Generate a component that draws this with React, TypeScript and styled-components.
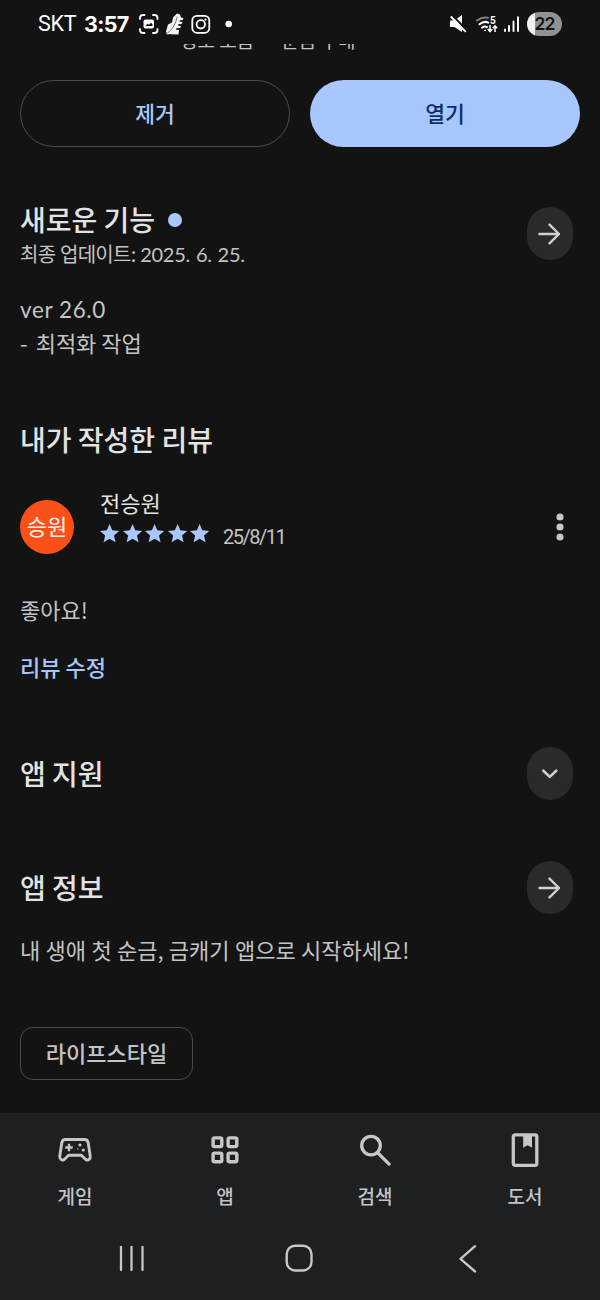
import React from "react";
import styled, { createGlobalStyle } from "styled-components";

const Global = createGlobalStyle`
  * { box-sizing: border-box; }
  body { margin: 0; background: #131313; }
`;

const Screen = styled.div`
  width: 600px;
  height: 1300px;
  display: flex;
  flex-direction: column;
  overflow: hidden;
  background: #131313;
  color: #c4c4c4;
  font-family: "Noto Sans CJK KR", sans-serif;
  font-size: 22px;
  white-space: nowrap;
`;

const StatusBar = styled.header`
  height: 44px;
  flex: none;
  display: flex;
  align-items: center;
  padding: 3px 38px 0;
  color: #fff;
`;

const Carrier = styled.span`
  width: 46px;
  font: 400 21.5px/24px Roboto, sans-serif;
  letter-spacing: -0.2px;
`;

const Clock = styled.span`
  width: 54px;
  font: 700 21.5px/24px Inter, sans-serif;
  letter-spacing: -0.7px;
`;

const StatusIcons = styled.svg`
  display: block;
  flex: none;
`;

const Spacer = styled.div`
  flex: 1;
`;

const Battery = styled.div`
  width: 35px;
  height: 24px;
  margin-left: 6px;
  border-radius: 12px;
  background: linear-gradient(90deg, #f2f2f2 0 7.5px, #929292 7.5px);
  color: #151515;
  text-align: center;
  font: 600 17.5px/24px Inter, sans-serif;
  letter-spacing: -0.8px;
`;

const Peek = styled.div`
  height: 36px;
  flex: none;
  overflow: hidden;
  padding-left: 180px;
  display: flex;
  gap: 27px;
  font-size: 19px;
  line-height: 28px;
  color: #c4c4c4;

  span {
    margin-top: -18px;
    height: 28px;
  }
`;

const Actions = styled.div`
  display: grid;
  grid-template-columns: 1fr 1fr;
  gap: 20px;
  padding: 0 20px;
  height: 67px;
  flex: none;
`;

const ActionButton = styled.button<{ $filled?: boolean }>`
  border: ${(p) => (p.$filled ? "0" : "1.5px solid #4a4b4c")};
  border-radius: 34px;
  background: ${(p) => (p.$filled ? "#a8c7fc" : "transparent")};
  color: ${(p) => (p.$filled ? "#0b2f6d" : "#a8c7fa")};
  font: 500 21.5px/30px "Noto Sans CJK KR", sans-serif;
  padding: 0 0 2px;
`;

const Section = styled.section<{ $top: number }>`
  margin-top: ${(p) => p.$top}px;
  padding: 0 20px;
  flex: none;
`;

const SectionHead = styled.div<{ $h: number }>`
  height: ${(p) => p.$h}px;
  display: flex;
  align-items: center;
  justify-content: space-between;
  padding-right: 7px;
`;

const Title = styled.h2`
  margin: 0;
  display: flex;
  align-items: center;
  gap: 13px;
  color: #e3e3e3;
  font-size: 28px;
  line-height: 38px;
  padding-bottom: 2px;
  font-weight: 500;
`;

const NewDot = styled.i`
  width: 14px;
  height: 14px;
  margin-top: 2px;
  border-radius: 50%;
  background: #a8c7fa;
`;

const Subtitle = styled.div`
  font-size: 20px;
  line-height: 28px;
  letter-spacing: -0.75px;
  word-spacing: 1px;
`;

const Digits = styled.span`
  font-family: Lato, sans-serif;
  font-size: 20px;
  line-height: 1;
  letter-spacing: -0.25px;
`;

const RoundButton = styled.button`
  width: 46px;
  height: 53px;
  border: 0;
  padding: 0;
  border-radius: 24px;
  background: #292a2c;
  display: grid;
  place-items: center;
`;

const Body = styled.p<{ $top?: number }>`
  margin: ${(p) => p.$top ?? 0}px 0 0;
  line-height: 28px;
  word-spacing: 0.4px;
`;

const Notes = styled.div`
  margin-top: 26px;
  line-height: 34px;
  height: 67px;
`;

const Version = styled.div`
  height: 33px;
  font-family: Lato, sans-serif;
  font-size: 22.5px;
  letter-spacing: 0.6px;
`;

const Note = styled.div`
  height: 34px;
  display: flex;
  gap: 8px;
  line-height: 32px;
`;

const ReviewRow = styled.div`
  height: 74px;
  margin-top: 30px;
  display: flex;
  align-items: center;
`;

const Avatar = styled.div`
  width: 54px;
  height: 54px;
  border-radius: 50%;
  background: #fb5118;
  color: #fff3ee;
  font-size: 22px;
  line-height: 51px;
  text-align: center;
`;

const Reviewer = styled.div`
  margin-left: 26px;
  flex: 1;
  height: 74px;
`;

const Name = styled.div`
  color: #e3e3e3;
  height: 28px;
  line-height: 25px;
`;

const Rating = styled.div`
  display: flex;
  align-items: center;
  height: 32px;
`;

const DateText = styled.span`
  margin: 5px 0 0 10px;
  font: 400 20px/26px Roboto, sans-serif;
  letter-spacing: -1.5px;
`;

const EditLink = styled.div`
  margin-top: 29px;
  line-height: 28px;
  font-weight: 500;
  color: #a8c7fa;
`;

const Chip = styled.span`
  display: block;
  width: 173px;
  height: 53px;
  border: 1.5px solid #4a4b4c;
  border-radius: 13px;
  text-align: center;
  font-weight: 500;
  line-height: 48px;
`;

const Bottom = styled.footer`
  margin-top: auto;
  height: 187px;
  flex: none;
  background: #1e1f21;
`;

const Tabs = styled.nav`
  display: grid;
  grid-template-columns: repeat(4, 1fr);
  height: 104px;
`;

const Tab = styled.div`
  display: flex;
  flex-direction: column;
  align-items: center;
  padding-top: 17px;
  font-size: 19px;
  line-height: 26px;
  font-weight: 500;

  svg {
    margin-bottom: 13px;
  }
`;

const SystemNav = styled.div`
  display: flex;
  justify-content: space-between;
  align-items: center;
  height: 82px;
  padding: 0 113px 0 111px;
`;

const ink = "#c7c7c7";

const Arrow = () => (
  <svg width="24" height="24" viewBox="0 0 24 24" fill="none" stroke="#d0d0d0" strokeWidth="2.4" strokeLinecap="round" strokeLinejoin="round">
    <path d="M1.500 12H21M11.500 2.600 21 12l-9.500 9.400" />
  </svg>
);

const Chevron = () => (
  <svg width="24" height="24" viewBox="0 0 24 24" fill="none" stroke="#d0d0d0" strokeWidth="2.6" strokeLinecap="round" strokeLinejoin="round">
    <path d="m5.400 8.700 6.400 6.200 6.400-6.200" />
  </svg>
);

const Star = () => (
  <svg width="22.6" height="22" viewBox="0 0 22.6 22">
    <path fill="#a8c7fa" d="m9.600 1 2.700 6.300 6.900.6-5.200 4.600 1.600 6.800-6-3.600-6 3.600 1.600-6.800L0 7.900l6.900-.6z" />
  </svg>
);

const LeftStatus = () => (
  <StatusIcons width="100" height="26" viewBox="138 11 100 26" fill="none" stroke="#fff" strokeWidth="1.8" strokeLinecap="round">
    <path d="M140 19v-1q0-3 3-3h1.500M153 15h1.500q3 0 3 3v1M157.500 29v1q0 3-3 3H153M144.500 33H143q-3 0-3-3v-1" />
    <rect x="143.500" y="19.500" width="10.500" height="9" rx="2" fill="#fff" stroke="none" />
    <path d="m145.500 26 2-2.200 1.500 1 2-2 1.500 1.500V26z" fill="#131313" stroke="none" />
    <g stroke="none" fill="#f4f4f4">
      <path d="m177 13.500 3 1 1 3-3 8-4 8-7 1-1-3 2-7 4-2 1-5z" />
      <path d="m177 17 6.500 1-1 2.200-6-.5zM175.500 21l7 1-1 2.200-7-.8zM174 25l7 1-1 2.200-7-.8zM172 29l7 1-.5 4.500-8-.3z" />
    </g>
    <path d="M177 17c-1 6-4 12-9.500 16" stroke="#555" strokeWidth=".8" />
    <rect x="192.300" y="15.800" width="17" height="17" rx="4.600" />
    <circle cx="200.800" cy="24.300" r="4.200" />
    <circle cx="205.500" cy="19.600" r="1.100" fill="#fff" stroke="none" />
    <circle cx="228.700" cy="24" r="3.300" fill="#fff" stroke="none" />
  </StatusIcons>
);

const RightStatus = () => (
  <StatusIcons width="72" height="26" viewBox="449 11 72 26" fill="none" stroke="#fff">
    <path d="M450 20.500h4.500L462 15v17l-7.500-5H450z" fill="#fff" stroke="none" />
    <path d="m452.300 15.500 15 15" stroke="#131313" strokeWidth="2" />
    <path d="m450.800 16.500 15 15.300" strokeWidth="1.900" />
    <g strokeWidth="2" strokeLinecap="round">
      <path d="M477 20.500q5.500-4 11-2.700" stroke="#808080" />
      <path d="M479.500 24.200q4.500-3.600 8.800-1.600M482 27.700q2.500-2 5-.6" />
      <circle cx="485" cy="30.400" r=".8" fill="#fff" stroke="none" />
    </g>
    <path d="M490 25v6M487.800 29l2.200 2.500 2.200-2.500M495 32v-6M492.800 28.300l2.200-2.500 2.200 2.500" strokeWidth="1.500" />
    <text x="490" y="23.800" fontFamily="Roboto, sans-serif" fontSize="10" fontWeight="700" fill="#fff" stroke="none">5</text>
    <path d="M505 29.500V31M509 26v5M513.500 21.500V31M518 17.200V31" strokeWidth="1.900" strokeLinecap="round" />
  </StatusIcons>
);

const GameIcon = () => (
  <svg width="40" height="40" viewBox="55 1130 40 40" fill="none" stroke={ink} strokeWidth="2.900" strokeLinejoin="round">
    <path d="M65.500 1139.500h19c2.200 0 3.300 1.200 3.700 3.200l2 13.300c.4 3-2 5.200-4.400 3.500l-4.500-4.200H68.700l-4.500 4.200c-2.400 1.700-4.800-.5-4.400-3.500l2-13.300c.4-2 1.500-3.200 3.700-3.200z" />
    <path d="M69 1143.800v7.400M65.300 1147.500h7.400" strokeWidth="2.300" />
    <g fill={ink} stroke="none">
      <circle cx="80" cy="1145" r="1.600" />
      <circle cx="83.300" cy="1150" r="1.600" />
      <circle cx="77.800" cy="1149" r=".7" />
    </g>
  </svg>
);

const AppsIcon = () => (
  <svg width="40" height="40" viewBox="0 0 40 40" fill="none" stroke={ink} strokeWidth="3.400">
    {[8.1, 23.1].map((x) => [7.9, 23.1].map((y) => <rect key={`${x}-${y}`} x={x} y={y} width="8.700" height="8.700" rx="1.600" />))}
  </svg>
);

const SearchIcon = () => (
  <svg width="40" height="40" viewBox="0 0 40 40" fill="none" stroke={ink} strokeWidth="3.300" strokeLinecap="round">
    <circle cx="16" cy="15.600" r="9.300" />
    <path d="m22.800 22.800 11.300 11.300" />
  </svg>
);

const BookIcon = () => (
  <svg width="40" height="40" viewBox="0 0 40 40" fill="none" stroke={ink} strokeWidth="3.300">
    <rect x="8.300" y="4.800" width="23.500" height="30.600" rx="1.800" />
    <path d="M18.200 4h8.800v13.800l-4.400-2.600-4.400 2.600z" fill={ink} stroke="none" />
  </svg>
);

const tabs = [
  { label: "게임", Icon: GameIcon },
  { label: "앱", Icon: AppsIcon },
  { label: "검색", Icon: SearchIcon },
  { label: "도서", Icon: BookIcon },
];

export default function App() {
  return (
    <Screen>
      <Global />
      <StatusBar>
        <Carrier>SKT</Carrier>
        <Clock>3:57</Clock>
        <LeftStatus />
        <Spacer />
        <RightStatus />
        <Battery>22</Battery>
      </StatusBar>
      <Peek>
        <span>정보 모음</span>
        <span>순금 구매</span>
      </Peek>
      <Actions>
        <ActionButton>제거</ActionButton>
        <ActionButton $filled>열기</ActionButton>
      </Actions>

      <Section $top={53}>
        <SectionHead $h={67}>
          <div>
            <Title>
              새로운 기능 <NewDot />
            </Title>
            <Subtitle>
              최종 업데이트: <Digits>2025. 6. 25.</Digits>
            </Subtitle>
          </div>
          <RoundButton><Arrow /></RoundButton>
        </SectionHead>
        <Notes>
          <Version>ver 26.0</Version>
          <Note>
            <span>-</span>
            <span>최적화 작업</span>
          </Note>
        </Notes>
      </Section>

      <Section $top={60}>
        <Title>내가 작성한 리뷰</Title>
        <ReviewRow>
          <Avatar>승원</Avatar>
          <Reviewer>
            <Name>전승원</Name>
            <Rating>
              {[0, 1, 2, 3, 4].map((n) => <Star key={n} />)}
              <DateText>25/8/11</DateText>
            </Rating>
          </Reviewer>
          <svg width="40" height="40" viewBox="0 0 40 40" fill={ink}>
            <circle cx="20" cy="10" r="3.600" />
            <circle cx="20" cy="20" r="3.600" />
            <circle cx="20" cy="30" r="3.600" />
          </svg>
        </ReviewRow>
        <Body $top={31}>좋아요!</Body>
        <EditLink>리뷰 수정</EditLink>
      </Section>

      <Section $top={67}>
        <SectionHead $h={53}>
          <Title>앱 지원</Title>
          <RoundButton><Chevron /></RoundButton>
        </SectionHead>
      </Section>

      <Section $top={61}>
        <SectionHead $h={53}>
          <Title>앱 정보</Title>
          <RoundButton><Arrow /></RoundButton>
        </SectionHead>
        <Body $top={21}>내 생애 첫 순금, 금캐기 앱으로 시작하세요!</Body>
      </Section>

      <Section $top={64}>
        <Chip>라이프스타일</Chip>
      </Section>

      <Bottom>
        <Tabs>
          {tabs.map(({ label, Icon }) => (
            <Tab key={label}>
              <Icon />
              {label}
            </Tab>
          ))}
        </Tabs>
        <SystemNav>
          <svg width="40" height="40" viewBox="0 0 40 40" stroke={ink} strokeWidth="2.300" strokeLinecap="round">
            <path d="M10 9v23M20.500 9v23M31.500 9v23" />
          </svg>
          <svg width="40" height="40" viewBox="0 0 40 40" fill="none" stroke={ink} strokeWidth="2.400">
            <rect x="7.700" y="7.700" width="24.800" height="24.800" rx="8.500" />
          </svg>
          <svg width="40" height="40" viewBox="0 0 40 40" fill="none" stroke={ink} strokeWidth="2.400" strokeLinecap="round" strokeLinejoin="round">
            <path d="M28 8.200 13.500 20.800 28 33.500" />
          </svg>
        </SystemNav>
      </Bottom>
    </Screen>
  );
}
